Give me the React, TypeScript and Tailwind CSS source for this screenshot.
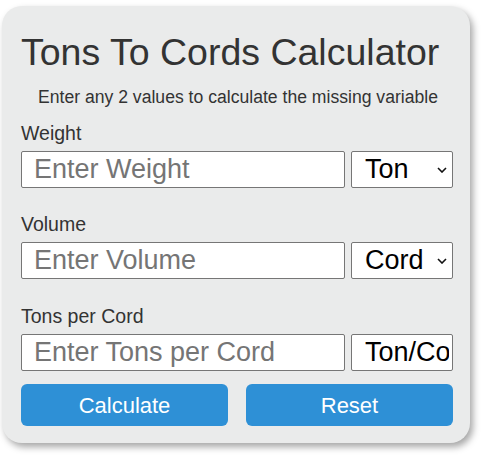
import React from 'react';

type Field = {
  label: string;
  placeholder: string;
  unit: string;
  arrow: boolean;
  gap: string;
};

const fields: Field[] = [
  { label: 'Weight', placeholder: 'Enter Weight', unit: 'Ton', arrow: true, gap: 'mt-[15px]' },
  { label: 'Volume', placeholder: 'Enter Volume', unit: 'Cord', arrow: true, gap: 'mt-[25px]' },
  { label: 'Tons per Cord', placeholder: 'Enter Tons per Cord', unit: 'Ton/Cord', arrow: false, gap: 'mt-[26px]' },
];

function Chevron(): React.ReactElement {
  return (
    <svg
      className="pointer-events-none absolute right-[6px] top-[16px]"
      width="10"
      height="6"
      viewBox="0 0 10 6"
      fill="none"
    >
      <path d="M1 1l4 4 4-4" stroke="#111" strokeWidth="1.6" />
    </svg>
  );
}

function FieldRow({ field }: { field: Field }): React.ReactElement {
  return (
    <div className={field.gap}>
      <label className="block h-[22px] text-[19.5px] leading-[22px] text-[#333]">
        {field.label}
      </label>
      <div className="mt-[7px] flex gap-[6px]">
        <input
          type="text"
          placeholder={field.placeholder}
          className="h-[37px] w-[324px] rounded-[2px] border border-[#767676] bg-white pl-[12px] text-[27px] text-black outline-none placeholder:text-[#757575]"
        />
        <div className="relative w-[102px]">
          <select
            defaultValue={field.unit}
            className="h-[37px] w-full appearance-none overflow-hidden rounded-[2px] border border-[#767676] bg-white pl-[13px] pr-[3px] text-[27px] leading-[35px] text-black outline-none"
          >
            <option>{field.unit}</option>
          </select>
          {field.arrow && <Chevron />}
        </div>
      </div>
    </div>
  );
}

export default function App(): React.ReactElement {
  return (
    <div className="min-h-[456px] bg-white pl-[2px] pt-[6px] font-['Liberation_Sans',Arial,sans-serif]">
      <div className="w-[468px] rounded-[20px] bg-[#eaebeb] pb-[17px] pl-[19px] pr-[15px] pt-[25px] shadow-[3px_4px_7px_rgba(0,0,0,0.35)]">
        <h1 className="h-[42px] text-[37.5px] font-normal leading-[42px] text-[#333]">
          Tons To Cords Calculator
        </h1>
        <p className="mt-[14px] h-[20px] text-center text-[17.6px] leading-[20px] text-[#333]">
          Enter any 2 values to calculate the missing variable
        </p>
        {fields.map((f) => (
          <FieldRow key={f.label} field={f} />
        ))}
        <div className="mt-[13px] flex gap-[18px]">
          <button className="h-[42px] w-[207px] rounded-[6px] bg-[#2e90d6] text-[22px] text-white">
            Calculate
          </button>
          <button className="h-[42px] w-[207px] rounded-[6px] bg-[#2e90d6] text-[22px] text-white">
            Reset
          </button>
        </div>
      </div>
    </div>
  );
}
